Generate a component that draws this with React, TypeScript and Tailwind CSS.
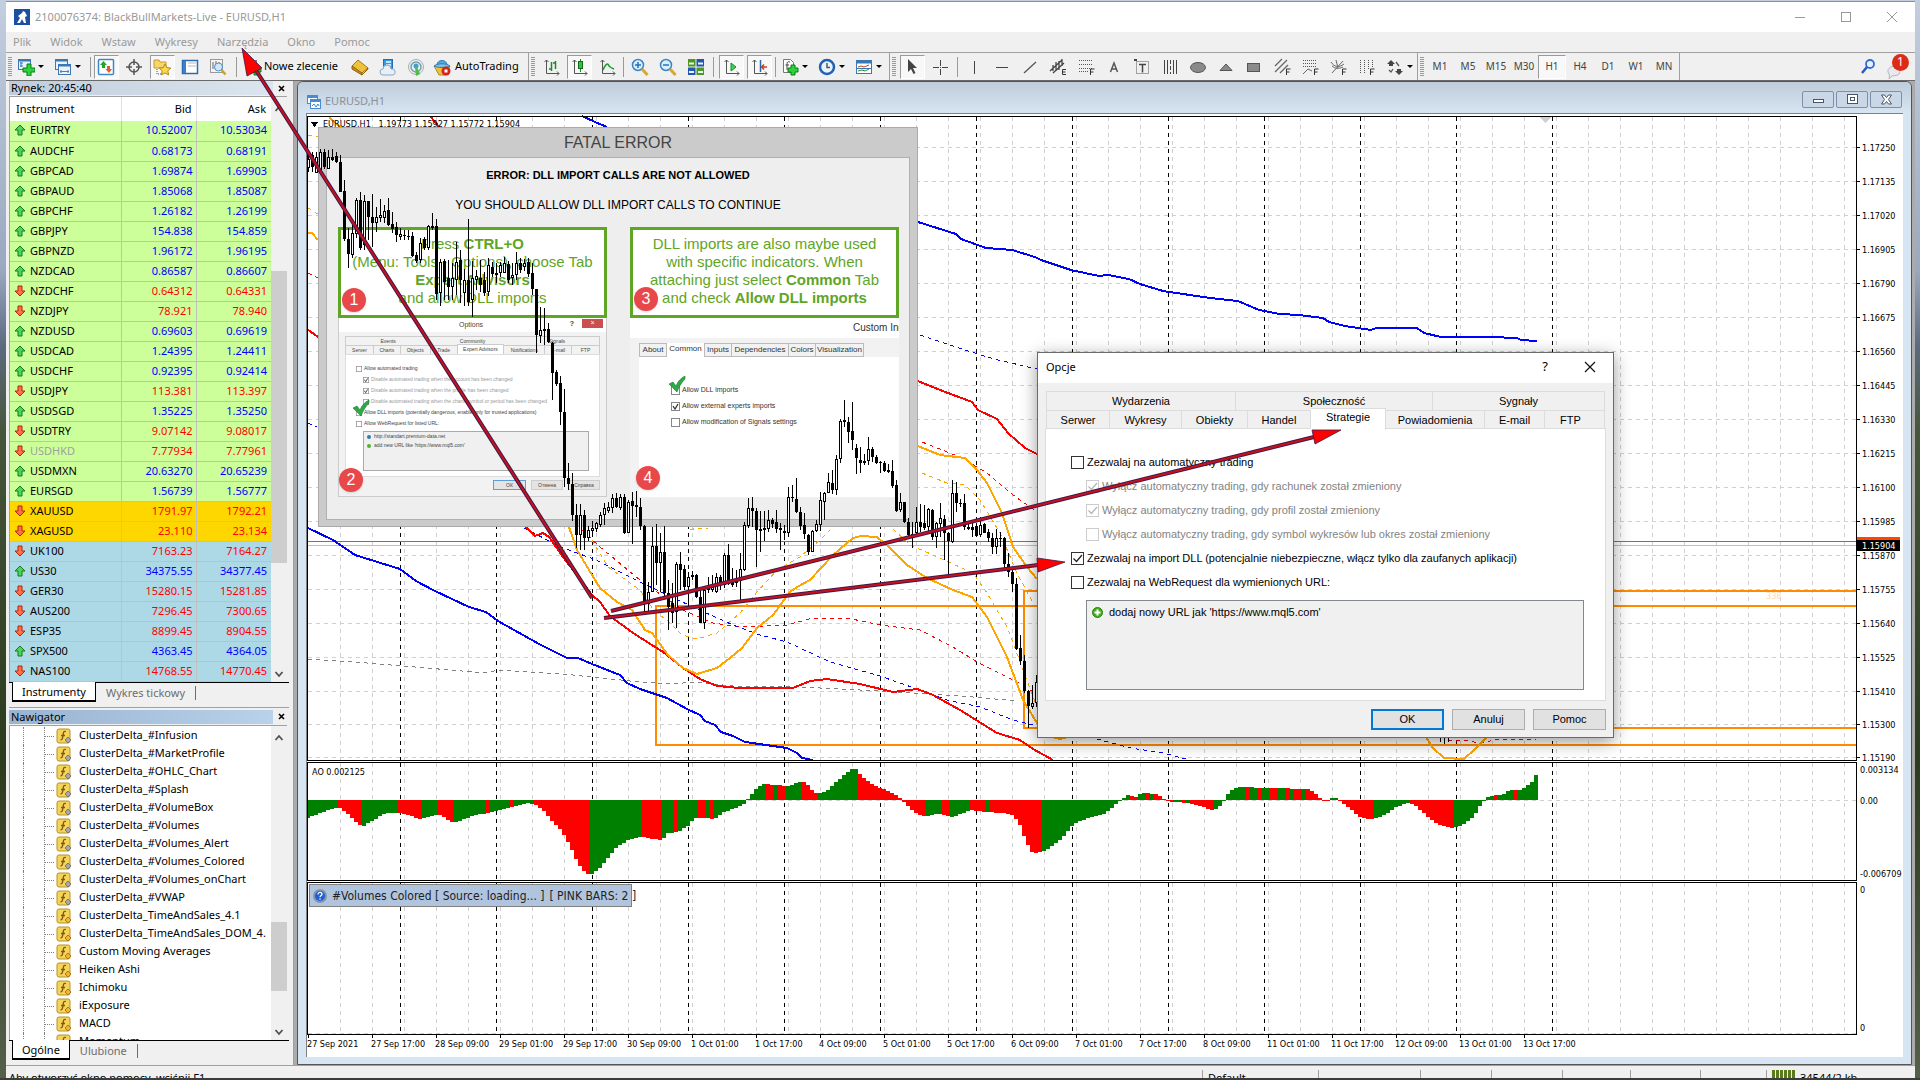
import React from "react";

/* ---------- market data ---------- */
type Quote = [string, string, string, "u" | "d", "g" | "y" | "b"];
const QUOTES: Quote[] = [
  ["EURTRY", "10.52007", "10.53034", "u", "g"], ["AUDCHF", "0.68173", "0.68191", "u", "g"],
  ["GBPCAD", "1.69874", "1.69903", "u", "g"], ["GBPAUD", "1.85068", "1.85087", "u", "g"],
  ["GBPCHF", "1.26182", "1.26199", "u", "g"], ["GBPJPY", "154.838", "154.859", "u", "g"],
  ["GBPNZD", "1.96172", "1.96195", "u", "g"], ["NZDCAD", "0.86587", "0.86607", "u", "g"],
  ["NZDCHF", "0.64312", "0.64331", "d", "g"], ["NZDJPY", "78.921", "78.940", "d", "g"],
  ["NZDUSD", "0.69603", "0.69619", "u", "g"], ["USDCAD", "1.24395", "1.24411", "u", "g"],
  ["USDCHF", "0.92395", "0.92414", "u", "g"], ["USDJPY", "113.381", "113.397", "d", "g"],
  ["USDSGD", "1.35225", "1.35250", "u", "g"], ["USDTRY", "9.07142", "9.08017", "d", "g"],
  ["USDHKD", "7.77934", "7.77961", "d", "g"], ["USDMXN", "20.63270", "20.65239", "u", "g"],
  ["EURSGD", "1.56739", "1.56777", "u", "g"], ["XAUUSD", "1791.97", "1792.21", "d", "y"],
  ["XAGUSD", "23.110", "23.134", "d", "y"], ["UK100", "7163.23", "7164.27", "d", "b"],
  ["US30", "34375.55", "34377.45", "u", "b"], ["GER30", "15280.15", "15281.85", "d", "b"],
  ["AUS200", "7296.45", "7300.65", "d", "b"], ["ESP35", "8899.45", "8904.55", "d", "b"],
  ["SPX500", "4363.45", "4364.05", "u", "b"], ["NAS100", "14768.55", "14770.45", "d", "b"],
];
const ROW_BG = { g: "bg-[#ccff99]", y: "bg-[#ffd700]", b: "bg-[#add8e6]" };

const INDICATORS = [
  "ClusterDelta_#Infusion", "ClusterDelta_#MarketProfile", "ClusterDelta_#OHLC_Chart", "ClusterDelta_#Splash",
  "ClusterDelta_#VolumeBox", "ClusterDelta_#Volumes", "ClusterDelta_#Volumes_Alert", "ClusterDelta_#Volumes_Colored",
  "ClusterDelta_#Volumes_onChart", "ClusterDelta_#VWAP", "ClusterDelta_TimeAndSales_4.1", "ClusterDelta_TimeAndSales_DOM_4.",
  "Custom Moving Averages", "Heiken Ashi", "Ichimoku", "iExposure", "MACD", "Momentum",
];

/* ---------- chart data ---------- */
/* high, body top, body bottom, low, in thirds of a pixel; u = rising bar */
const BARS_A = `160,178,203,217,u 155,165,200,215 155,170,218,220,u 148,155,218,218,u 148,157,200,207 150,172,207,207,u 148,172,180,182 155,168,186,190 166,185,275,275 240,273,418,422 384,418,463,505 375,400,465,475,u 293,300,402,415,u 275,300,443,450 285,303,435,450,u 303,303,352,420 282,350,370,440 320,350,370,397,u 298,345,355,365,u 315,332,355,370,u 295,330,375,378 335,372,388,398 367,380,405,425 385,402,412,420,u 390,404,409,420 390,407,410,420 397,408,467,472 455,465,482,490 415,430,480,490,u 412,418,445,450 375,378,445,450,u 340,378,384,390 358,378,582,600 478,485,580,617,u 478,483,545,600 480,535,562,600 490,535,560,600,u 425,485,540,585,u 450,480,540,610 508,540,580,617,u 358,540,605,617 483,535,600,650,u 510,528,540,570,u 480,535,555,575 515,540,578,588 475,495,575,588,u 485,500,522,530 490,520,524,550 485,495,520,530,u 470,490,520,520,u 482,492,540,550 490,525,535,555,u 455,490,525,540,u 473,490,510,520 478,490,500,512,u 475,487,523,530 490,520,568,585 568,568,705,759 620,690,708,729,u 625,687,693,735 670,688,727,730 727,730,819,900 810,816,852,858 828,849,936,975 867,936,1134,1161 1089,1134,1152,1170 1119,1152,1245,1263 1212,1245,1305,1344 1212,1245,1305,1350,u 1230,1245,1314,1350 1278,1290,1314,1323,u 1263,1284,1293,1305,u 1266,1269,1287,1296,u`;
const BARS_B = `515,525,555,560,u 488,503,525,555,u 485,500,512,520,u 462,475,505,520,u 460,475,502,505 462,470,505,510,u 463,470,580,583 480,485,580,580,u 455,484,497,612 452,495,500,530 475,500,557,570 555,557,793,815 725,755,793,820,u 560,618,755,757,u 552,618,668,735 580,635,668,755,u 558,635,760,768 720,760,800,870 730,790,818,850 667,672,815,865,u 635,672,690,750 675,687,742,750 695,710,742,800,u 693,705,712,720,u 703,706,770,775 745,770,850,850 745,750,850,868,u 710,738,750,760,u 705,737,750,755,u 700,712,755,760,u 705,712,735,750 638,645,735,745,u 612,645,733,735 685,725,735,740 690,722,728,740 640,687,722,780,u 545,555,690,692,u 475,505,558,565,u 472,505,512,560 505,512,570,680 512,566,572,635 512,565,570,602,u 510,540,568,575,u 535,540,552,565 510,545,568,580 550,565,570,630 555,572,580,600 440,470,580,590,u 435,470,475,485 415,478,515,520 500,515,557,570 520,555,582,598 582,584,635,645 570,573,635,635,u 540,553,573,575,u 455,480,555,572,u 455,460,485,540,u 400,427,460,460,u 390,428,450,462 345,358,450,465,u 238,242,358,370,u 180,240,246,260 230,245,275,308 185,273,300,330 312,325,355,402 320,360,370,400 342,362,368,375,u 290,328,362,375,u 320,328,350,365 345,350,368,372 362,365,368,398 362,368,392,397 372,390,396,400 360,393,437,445 420,435,512,515 458,487,510,515,u 485,487,545,548 535,545,585,587 545,583,588,625,u 500,547,580,590,u 492,547,560,575 495,548,563,570 505,508,562,575,u 508,510,590,600 545,550,590,625,u 490,535,553,590,u 525,537,580,660 575,580,603,705 420,460,605,608,u 425,460,490,515 478,488,492,500 463,490,560,570 545,560,568,570 540,562,570,590 548,557,587,590 530,555,585,590,u 548,553,578,580 568,575,595,605 580,593,620,643 568,595,620,643,u 575,593,597,620 592,595,673,685 640,673,695,710 680,695,733,755 715,733,928,930 885,925,962,975 945,962,1052,1060 1050,1053,1097,1165 1035,1088,1100,1108,u 1005,1025,1090,1100,u`;

type Bar = { x: number; h: number; t: number; b: number; l: number; up: boolean };
const parseBars = (src: string, x0: number, y0: number): Bar[] =>
  src.split(" ").map((s, i) => {
    const [h, t, b, l, u] = s.split(",");
    const y = (v: string) => Math.round(y0 + Number(v) / 3);
    return { x: x0 + i * 4, h: y(h), t: y(t), b: Math.max(y(b), y(t) + 1), l: y(l), up: u === "u" };
  });
const BARS = [...parseBars(BARS_A, 308, 100), ...parseBars(BARS_B, 600, 340)];

/* oscillator: envelope points and colour runs */
const AO_ENV = [308,818,320,813,338,807,346,812,354,820,362,827,370,822,386,813,402,813,414,817,422,819,438,814,454,823,462,820,474,815,490,813,510,807,530,803,538,806,546,813,554,823,562,831,570,845,576,859,582,869,590,875,598,870,606,860,616,848,628,840,642,836,654,839,662,840,668,833,678,832,688,826,694,818,706,818,714,819,722,813,736,808,745,803,748,799,756,789,762,784,790,786,798,782,806,782,814,793,826,792,834,784,842,777,852,769,856,769,862,777,874,785,886,790,894,794,900,798,906,804,914,812,926,817,934,814,942,814,950,817,958,815,970,810,986,812,1006,813,1014,816,1020,825,1026,841,1032,852,1038,853,1046,850,1054,845,1064,836,1074,824,1090,817,1106,813,1114,806,1122,799,1128,795,1136,797,1142,793,1158,794,1166,801,1190,803,1202,806,1214,811,1222,804,1230,791,1238,787,1310,789,1318,796,1326,802,1334,797,1338,798,1343,803,1354,812,1362,818,1374,819,1386,814,1396,807,1408,803,1414,804,1426,815,1438,824,1450,828,1462,825,1474,816,1480,806,1486,797,1494,795,1502,795,1510,790,1520,790,1528,785,1532,782,1536,775];
const AO_RUNS = [338,362,398,422,438,454,486,490,510,514,534,590,642,662,674,678,698,706,710,714,766,774,778,786,802,818,858,926,942,950,970,986,990,1042,1130,1138,1146,1150,1154,1174,1182,1186,1190,1214,1246,1250,1258,1262,1270,1278,1286,1290,1294,1302,1306,1330,1338,1374,1410,1454,1494,1498,1514,1518,1538];
const aoAt = (x: number) => {
  for (let i = 0; i + 3 < AO_ENV.length; i += 2) {
    const [xa, ya, xb, yb] = AO_ENV.slice(i, i + 4);
    if (x >= xa && x <= xb) return Math.round(ya + ((yb - ya) * (x - xa)) / (xb - xa));
  }
  return AO_ENV[AO_ENV.length - 1];
};
const AO = Array.from({ length: 308 }, (_, i) => {
  const x = 306 + i * 4;
  const run = AO_RUNS.findIndex((e) => x + 2 < e);
  return { x, y: aoAt(Math.max(x + 2, 308)), red: run % 2 === 1 };
});

const SOLID: [string, string][] = [
  ["#0000ff", "582,116 595,122 607,127"],
  ["#0000ff", "918,222 956,234 961,239 986,248 1012,250 1035,257 1041,260 1071,270 1099,276 1108,275 1129,279 1140,284 1163,291 1210,298 1238,301 1259,310 1280,314 1299,315 1323,318 1329,322 1345,326 1371,330 1376,328 1417,328 1424,333 1441,337 1490,337 1517,338 1521,340 1537,341"],
  ["#0000ff", "308,528 333,540 355,555 400,569 416,581 435,591 469,607 486,612 498,621 539,644 567,658 578,658 592,664 620,675 627,683 640,689 667,698 687,709 700,715 705,721 715,725 721,732 733,736 745,742 773,746 787,748 797,753 802,758 813,760"],
  ["#ff0000", "430,116 440,128"], ["#ff0000", "307,329 318,337"],
  ["#ff0000", "918,381 940,390 972,402 978,410 997,419 1008,433 1025,448 1037,454"],
  ["#ff0000", "526,527 535,536 543,533 549,537 563,557 592,595 600,602 610,616 633,633 663,652 683,668 700,679 717,686 740,688 793,688 810,681 827,679 860,684 893,692 917,689 933,695 960,710 997,733 1020,740 1033,749 1053,760"],
  ["#ffa500", "308,233 312,233 318,240"], ["#ffa500", "329,117 341,128"],
  ["#ffa500", "918,446 940,455 965,458 977,470 987,483 1002,513 1013,547 1027,567 1037,579"],
  ["#ffa500", "569,527 577,550 589,570 600,588 617,602 632,610 645,630 652,633 668,655 683,668 697,674 717,668 730,658 742,648 757,628 773,615 790,592 797,587 810,580 833,555 853,538 861,536 877,537 890,548 907,565 927,578 953,590 972,597 987,617 1007,657 1023,700 1037,723 1048,736 1060,739 1072,736"],
  ["#ffa500", "1426,737 1433,748 1444,758 1464,759 1475,749 1487,737"],
];
const DASHED: [string, string][] = [
  ["#ffa500", "592,540 608,567 640,590 655,612 667,620 682,635 697,639 717,633 740,613 757,592 777,570 800,557 820,540 832,528"],
  ["#ffa500", "690,530 697,528 708,528"],
  ["#ffa500", "893,529 910,545 933,555 973,573 987,593 1007,627 1037,707"],
  ["#ffa500", "922,473 947,483 965,485 980,500 1000,533 1017,573 1033,603"],
  ["#ffa500", "308,135 318,137"], ["#ffa500", "308,208 318,214"],
  ["#ff0000", "582,530 600,547 640,580 683,610 713,623 740,627 787,625 813,618 847,618 880,625 920,630 953,647 977,662 1017,682 1037,694"],
  ["#ff0000", "922,442 960,457 987,473 1013,495 1037,512"], ["#ff0000", "308,273 318,278"],
  ["#ff0000", "1448,740 1463,740 1480,743 1500,739 1520,740 1536,739"],
  ["#0000ff", "524,528 561,547 596,560 640,582 693,607 733,625 760,635 787,642 830,662 880,676 917,689 947,700 980,707 1013,720 1037,726"],
  ["#0000ff", "1089,737 1131,748 1163,753 1186,759"],
  ["#0000ff", "920,335 965,350 994,359 1037,369"], ["#0000ff", "308,423 317,427"],
  ["#808080", "308,659 367,663 486,673 498,670 563,674 640,682 673,684 693,682 733,686 800,687 880,691 973,697 1017,701"],
];

const PRICES = ["1.17250","1.17135","1.17020","1.16905","1.16790","1.16675","1.16560","1.16445","1.16330","1.16215","1.16100","1.15985","1.15870","1.15755","1.15640","1.15525","1.15410","1.15300","1.15190"];
const priceY = (i: number) => (i < 17 ? 147 + i * 34 : i === 17 ? 724 : 757);
const TIMES = ["27 Sep 2021","27 Sep 17:00","28 Sep 09:00","29 Sep 01:00","29 Sep 17:00","30 Sep 09:00","1 Oct 01:00","1 Oct 17:00","4 Oct 09:00","5 Oct 01:00","5 Oct 17:00","6 Oct 09:00","7 Oct 01:00","7 Oct 17:00","8 Oct 09:00","11 Oct 01:00","11 Oct 17:00","12 Oct 09:00","13 Oct 01:00","13 Oct 17:00"];
const PANES = [[117, 760], [763, 880], [883, 1034]];

function ChartBack() {
  return (
    <svg className="absolute inset-0 size-full" aria-hidden="true">
      <g transform="translate(-306 -113)" shapeRendering="crispEdges" fill="none">
        {PANES.map(([a, b]) => (
          <g key={a}>
            {Array.from({ length: 48 }, (_, i) => (
              <path key={i} d={`M${340.5 + i * 32} ${a}V${b}`} stroke="#d0d0d0" strokeDasharray="4 4" />
            ))}
            {Array.from({ length: 13 }, (_, i) => (
              <path key={i} d={`M${400.5 + i * 96} ${a}V${b}`} stroke="#000" strokeDasharray="4 4" />
            ))}
          </g>
        ))}
        {PRICES.map((p, i) => (
          <path key={p} d={`M308 ${priceY(i) + 0.5}H1856`} stroke="#d0d0d0" strokeDasharray="4 4" />
        ))}
        <path d="M308 800.5H1856" stroke="#d0d0d0" strokeDasharray="4 4" />
        <path d="M308 1033.5H1856" stroke="#d0d0d0" strokeDasharray="4 4" />
        {AO.map((a) => (
          <rect key={a.x} x={Math.max(a.x, 308)} y={Math.min(a.y, 800)} width={a.x < 308 ? 2 : 4} height={Math.max(Math.abs(a.y - 800), 1)} fill={a.red ? "#ff0000" : "#008000"} />
        ))}
        <path d="M308 545.5H1856" stroke="#c0c0c0" />
        <path d="M308 541.5H1856" stroke="#ff4500" />
        <g stroke="#ff8c00" strokeWidth="2">
          <path d="M1856 606H656V745H1856" />
          <path d="M1856 591H1024V728H1856" />
        </g>
        {DASHED.map(([c, p]) => <polyline key={p} points={p} stroke={c} strokeDasharray="4 4" />)}
        {SOLID.map(([c, p]) => <polyline key={p} points={p} stroke={c} strokeWidth="2" />)}
        <path d="M1540 117h11l-5.500 6z" fill="#d0d0d0" />
        <path d="M311 122h7l-3.500 5z" fill="#000" />
        <g stroke="#000">
          <path d="M1856.500 116.500H307.500V760.500H1856.500z" />
          <path d="M1856.500 762.500H307.500V880.500H1856.500z" />
          <path d="M1856.500 882.500H307.500V1034.500H1856.500z" />
          {PRICES.map((p, i) => <path key={p} d={`M1856 ${priceY(i) + 0.5}h4`} />)}
          {TIMES.map((t, i) => <path key={t} d={`M${308.5 + i * 64} 1034v4`} />)}
        </g>
        <rect x="1857" y="537" width="43" height="10" fill="#ff4500" />
        <rect x="1857" y="540" width="43" height="11" fill="#000" />
        <g fill="#000" fontFamily="'DejaVu Sans Condensed', 'DejaVu Sans', sans-serif" fontSize="9">
          {PRICES.map((p, i) => <text key={p} x="1862" y={priceY(i) + 4}>{p}</text>)}
          <text x="1862" y="549" fill="#fff">1.15904</text>
          <text x="1860" y="773">0.003134</text>
          <text x="1860" y="804">0.00</text>
          <text x="1860" y="877">-0.006709</text>
          <text x="1860" y="893">0</text>
          <text x="1860" y="1031">0</text>
          {TIMES.map((t, i) => <text key={t} x={307 + i * 64} y="1047">{t}</text>)}
          <text x="312" y="775">AO 0.002125</text>
          <text x="323" y="127">EURUSD,H1&nbsp;&nbsp; 1.19773 1.15927 1.15772 1.15904</text>
          <text x="1766" y="599" fill="#ffd9a8">338</text>
        </g>
      </g>
    </svg>
  );
}

function Candles() {
  return (
    <svg className="pointer-events-none absolute inset-0 size-full" aria-hidden="true">
      <g transform="translate(-306 -113)" shapeRendering="crispEdges">
        {BARS.map((b) => (
          <g key={b.x}>
            <rect x={b.x} y={b.h} width="1" height={Math.max(b.l - b.h, 1)} />
            <rect x={b.x - 1} y={b.t} width="3" height={b.b - b.t} />
            {b.up && b.b - b.t > 2 && <rect x={b.x} y={b.t + 1} width="1" height={b.b - b.t - 2} fill="#fff" />}
          </g>
        ))}
        <path d="M1440 738v4h1v-4zM1444 738v6h1v-6zM1448 737v5h1v-5z" />
      </g>
    </svg>
  );
}

/* ---------- icons ---------- */
const S = ({ children, w = 18, className = "" }: { children: React.ReactNode; w?: number; className?: string }) => (
  <svg width={w} height="18" viewBox={`0 0 ${w} 18`} fill="none" className={`shrink-0 ${className}`} aria-hidden="true">{children}</svg>
);
const axes = <path d="M4.500 2v13.500H17M2.500 4l2-2 2 2M15 13.500l2 2-2 2" stroke="#555" />;
const fLetter = <path d="M13.500 17v-6h4M13.500 14h3" stroke="#333" />;
const I: Record<string, React.ReactNode> = {
  newChart: <S><rect x="1.500" y="1.500" width="12" height="10" fill="#eaf3fb" stroke="#3a78b5" /><path d="M1 2.500h13" stroke="#3a78b5" strokeWidth="2" /><path d="M4 4v5M3 5h3M3 8h3" stroke="#3a78b5" /><path d="M10 6h4v4h4v4h-4v4h-4v-4H6v-4h4z" fill="#2bd23b" stroke="#0b7d16" /></S>,
  profiles: <S><rect x="1.500" y="1.500" width="12" height="10" fill="#eaf3fb" stroke="#3a78b5" /><rect x="4.500" y="6.500" width="12" height="10" fill="#eaf3fb" stroke="#3a78b5" /><path d="M1 2.500h12M4 7.500h13" stroke="#3a78b5" strokeWidth="2" /><path d="M6 13.500h9M7 12v3M14 12v3" stroke="#777" /></S>,
  market: <S><rect x="1.500" y="1.500" width="15" height="15" rx="1" fill="#fff" stroke="#3a88c8" strokeWidth="1.500" /><path d="M6.500 3l3.500 4H8v3H5V7H3z" fill="#22a52a" /><path d="M12 15l-3.500-4H10V8h3v3h2z" fill="#e8582a" /></S>,
  cross: <S><circle cx="9" cy="9" r="5" stroke="#555" strokeWidth="1.500" /><path d="M9 1v6M9 11v6M1 9h6M11 9h6" stroke="#555" strokeWidth="1.500" /></S>,
  folder: <S><path d="M1 2h5l1 2h6v6H1z" fill="#f6d56b" stroke="#c99a2a" /><path d="M4 11v5h4" stroke="#555" strokeDasharray="1 1" /><path d="M12 6l1.800 3.600 4 .5-3 2.700.8 4.100-3.600-2-3.600 2 .8-4.100-3-2.700 4-.5z" fill="#ffd84d" stroke="#b5851a" /></S>,
  terminal: <S><rect x="1.500" y="2.500" width="15" height="13" fill="#fff" stroke="#2b6db3" strokeWidth="1.500" /><rect x="2" y="3" width="3" height="12" fill="#3f7fd0" /><path d="M7 5h8M7 8h8" stroke="#b8b8b8" /></S>,
  tester: <S><rect x="1.500" y="1.500" width="12" height="13" fill="#f4f4f4" stroke="#999" /><path d="M4 4v7M7 3v6M10 4v5" stroke="#666" /><circle cx="9.500" cy="9" r="4" fill="#cfe8fb" stroke="#4a90c8" /><path d="M12.500 12l4 4.500" stroke="#caa02c" strokeWidth="2.500" /></S>,
  order: <S><rect x="2.500" y="2.500" width="10" height="12" fill="#fff" stroke="#777" /><path d="M10 8h4v3h3v3h-3v3h-4v-3H7v-3h3z" fill="#21c431" stroke="#0b7d16" /></S>,
  book: <S><path d="M1 8l6-6 10 8-6 6z" fill="#f0c23a" stroke="#a8761a" /><path d="M1 8v3l10 6v-2z" fill="#c98f22" stroke="#8f6214" /><path d="M11 17l6-6v-1l-6 5z" fill="#fff3c8" stroke="#8f6214" /></S>,
  cloud: <S><rect x="4.500" y="1.500" width="9" height="10" fill="#2f9be8" stroke="#1e6fb8" /><path d="M7 4h5M7 7h5" stroke="#fff" strokeWidth="1.500" /><path d="M4 17a3 3 0 010-6 4 4 0 018 0 3 3 0 012 6z" fill="#e6eef7" stroke="#8aa4c2" /></S>,
  signal: <S><circle cx="9" cy="9" r="7.500" stroke="#9fb5ab" /><circle cx="9" cy="9" r="5" stroke="#6f9fb0" strokeWidth="1.500" /><circle cx="9" cy="8" r="2.500" fill="#3aa1c8" /><path d="M8 9h2l3 7-4 2z" fill="#55b848" /></S>,
  auto: <S><path d="M1 8h16l-4 9H6z" fill="#f0c23a" stroke="#b18a22" /><path d="M4 7c0-6 10-6 10 0z" fill="#56a8dc" stroke="#2f7db0" /><path d="M1 8c4-3 12-3 16 0-4 2-12 2-16 0z" fill="#7fc0e6" stroke="#2f7db0" /><circle cx="13" cy="13" r="4.500" fill="#d3261a" /><rect x="11.500" y="11.500" width="3" height="3" fill="#fff" /></S>,
  bars: <S>{axes}<path d="M9.500 4v9M7 11h2.500M13.500 3v8M11 5h2.500" stroke="#1c8a28" strokeWidth="1.500" /></S>,
  candle: <S>{axes}<path d="M10.500 1v13" stroke="#1c8a28" /><rect x="8.500" y="3.500" width="4" height="7" fill="#2fc440" stroke="#116b1b" /></S>,
  lineC: <S>{axes}<path d="M5 12c3-7 5-7 6-4 1 1 2 2 5 3" stroke="#1c9a28" strokeWidth="1.500" /></S>,
  zin: <S><circle cx="7" cy="7" r="5.500" fill="#d9efff" stroke="#3a83c4" strokeWidth="1.500" /><path d="M4 7h6M7 4v6" stroke="#2472b8" strokeWidth="1.500" /><path d="M11 11l5.500 6" stroke="#d9a82c" strokeWidth="3" /></S>,
  zout: <S><circle cx="7" cy="7" r="5.500" fill="#d9efff" stroke="#3a83c4" strokeWidth="1.500" /><path d="M4 7h6" stroke="#2472b8" strokeWidth="1.500" /><path d="M11 11l5.500 6" stroke="#d9a82c" strokeWidth="3" /></S>,
  tile: <S><rect x="1" y="1" width="7.500" height="7.500" fill="#4a9a1e" /><rect x="9.500" y="1" width="7.500" height="7.500" fill="#2456b0" /><rect x="1" y="9.500" width="7.500" height="7.500" fill="#2456b0" /><rect x="9.500" y="9.500" width="7.500" height="7.500" fill="#4a9a1e" /><path d="M2 5.500h5M11 5.500h5M2 14h5M11 14h5" stroke="#e9f4ff" strokeWidth="2" /></S>,
  shift: <S>{axes}<path d="M9 5v8l5-4z" fill="#45d055" stroke="#168a22" /></S>,
  autoS: <S>{axes}<path d="M10.500 2v12" stroke="#2a66b0" strokeWidth="1.500" /><path d="M17 9h-5M14 6.500L11.500 9l2.500 2.500" stroke="#c3401c" strokeWidth="1.500" /></S>,
  indic: <S><path d="M2.500 1.500h7l3 3v10h-10z" fill="#fff" stroke="#777" /><path d="M9 4c-3-1-3 1-3 3v5M4.500 7H8" stroke="#444" /><path d="M10 7h4v3h3v4h-3v3h-4v-3H7v-4h3z" fill="#2bd23b" stroke="#0b7d16" /></S>,
  clock: <S><circle cx="9" cy="9" r="7" fill="#e8f4ff" stroke="#1f62b3" strokeWidth="2.500" /><path d="M9 5v4.500h3" stroke="#555" strokeWidth="1.500" /></S>,
  templ: <S><rect x="1.500" y="2.500" width="15" height="13" fill="#fff" stroke="#3a78b5" /><path d="M1 4h16" stroke="#3a78b5" strokeWidth="3" /><path d="M3 9l3-1 3 1 5-2" stroke="#b04a2a" /><path d="M3 13l4-1 3 1 4-2" stroke="#2a8a3a" /><path d="M2 10.500h14" stroke="#3a78b5" /></S>,
  cursor: <S><path d="M5 1v13l3-3 2.500 5 2-1L10 10h4z" fill="#444" /></S>,
  plus: <S><path d="M9.500 2v6M9.500 11v6M2 9.500h6M11 9.500h6M9 9.500h1" stroke="#444" /></S>,
  vline: <S><path d="M9.500 3v13" stroke="#444" /></S>,
  hline: <S><path d="M3 9.500h12" stroke="#444" /></S>,
  diag: <S><path d="M3 15L15 4" stroke="#555" strokeWidth="1.300" /></S>,
  chanE: <S><path d="M1 13L13 2M4 15L15 5M4 7v6M7 4v9M10 3v9M13 1v7" stroke="#444" strokeWidth="1.300" /><path d="M17 11.500h-3.500v5H17M13.500 14h3" stroke="#333" /></S>,
  fibo: <S><path d="M2 2.500h14M2 6.500h14M2 10.500h14M2 13.500h9" stroke="#555" strokeDasharray="1 1" />{fLetter}</S>,
  textA: <S><path d="M5.500 14L9 5l3.500 9M7 11h4" stroke="#555" strokeWidth="1.500" /></S>,
  label: <S><rect x="3.500" y="3.500" width="12" height="12" stroke="#555" strokeDasharray="1 1" /><path d="M6 6.500h7M9.500 6.500v8" stroke="#444" strokeWidth="1.500" /><path d="M1 1h3v2H1z" fill="#444" /></S>,
  cycles: <S><path d="M3.500 2v14M6.500 2v14M12.500 2v14M15.500 2v14" stroke="#444" /><path d="M9.500 2v14" stroke="#444" strokeDasharray="4 2" /></S>,
  ell: <S><ellipse cx="9" cy="9.500" rx="7.500" ry="5" fill="#8a8a8a" stroke="#555" /></S>,
  tri: <S><path d="M3 12.500L9 6l6 6.500z" fill="#8a8a8a" stroke="#555" /></S>,
  rect: <S><rect x="2.500" y="5.500" width="12" height="8" fill="#8a8a8a" stroke="#555" /></S>,
  fchan: <S><path d="M2 8L9 1M2 14L14 2M7 15l8-8" stroke="#666" strokeWidth="1.300" />{fLetter}</S>,
  fexp: <S><path d="M2 2.500h14M2 5.500h14M2 8.500h14" stroke="#555" strokeDasharray="1 1" /><path d="M2 16l5-5 4 2" stroke="#666" />{fLetter}</S>,
  ffan: <S><path d="M3 15L14 3M2 4c3 5 8 6 13 2M3 8c4 3 6 3 11 1M7 2l2 8" stroke="#666" />{fLetter}</S>,
  ftime: <S><path d="M3.500 2v13M7.500 2v13M11.500 2v9M15.500 2v8" stroke="#555" strokeDasharray="1 1" />{fLetter}</S>,
  arrows: <S><path d="M5 2l4 4H7v2H3V6H1z M13 17l-4-4h2v-2h4v2h2z" fill="#444" /><path d="M3 12l2 2 2-3M10 4l3 4" stroke="#555" strokeWidth="1.300" /></S>,
};

function Quo({ up }: { up: boolean }) {
  return (
    <svg width="12" height="12" viewBox="0 0 12 12" className="shrink-0" aria-hidden="true">
      {up ? <path d="M6 1l5 5H8v5H4V6H1z" fill="#4fd35a" stroke="#137a1d" /> : <path d="M6 11L1 6h3V1h4v5h3z" fill="#ff7048" stroke="#b3240c" />}
    </svg>
  );
}

/* ---------- toolbar parts ---------- */
const Grip = () => <span className="mx-[2px] h-5 w-1 shrink-0 bg-[repeating-linear-gradient(#9a9a9a_0_1px,transparent_1px_2px)]" />;
const Sep = ({ w }: { w: string }) => <span className={`flex h-5 shrink-0 justify-center ${w}`}><span className="h-full w-px bg-[#9a9a9a]" /></span>;
const Caret = () => <span className="border-x-[3px] border-t-[3px] border-x-transparent border-t-black" />;
function Tool({ icon, on = false, label }: { icon: string; on?: boolean; label: string }) {
  return (
    <button type="button" aria-label={label} className="flex h-6 w-7 shrink-0 items-center justify-center">
      <span className={on ? "flex h-6 w-[25px] items-center justify-center border border-b-white border-l-[#9a9a9a] border-r-white border-t-[#9a9a9a] bg-[#f8f8f8]" : ""}>{I[icon]}</span>
    </button>
  );
}
function DropTool({ icon, label }: { icon: string; label: string }) {
  return <button type="button" aria-label={label} className="flex h-6 w-[37px] shrink-0 items-center gap-[3px] pl-[3px]">{I[icon]}<Caret /></button>;
}
const DRAW = ["vline", "hline", "diag", "chanE", "fibo", "textA", "label", "cycles", "ell", "tri", "rect", "fchan", "fexp", "ffan", "ftime"];

function Toolbar() {
  return (
    <div className="flex h-[28px] shrink-0 items-center border-t border-[#a0a0a0] bg-[#f0f0f0] text-[11px]">
      <div className="flex h-full w-[523px] shrink-0 items-center border-r border-[#a0a0a0]">
        <Grip />
        <DropTool icon="newChart" label="Nowy wykres" /><DropTool icon="profiles" label="Profile" />
        <Sep w="w-[4px]" />
        <Tool icon="market" on label="Rynek" /><Tool icon="cross" label="Okno danych" /><Tool icon="folder" on label="Nawigator" />
        <Tool icon="terminal" label="Terminal" /><Tool icon="tester" label="Tester" />
        <Sep w="w-[8px]" />
        <button type="button" className="flex w-[106px] shrink-0 items-center gap-[2px] whitespace-nowrap pl-1">{I.order}Nowe zlecenie</button>
        <Tool icon="book" label="MetaEditor" /><Tool icon="cloud" label="VPS" /><Tool icon="signal" label="Sygnały" />
        <button type="button" className="flex shrink-0 items-center gap-1 whitespace-nowrap pl-[3px]">{I.auto}AutoTrading</button>
      </div>
      <div className="flex h-full w-[361px] shrink-0 items-center border-r border-[#a0a0a0]">
        <Grip />
        <Tool icon="bars" label="Słupki" /><Tool icon="candle" on label="Świece" /><Tool icon="lineC" label="Linia" />
        <Sep w="w-[5px]" />
        <Tool icon="zin" label="Powiększ" /><Tool icon="zout" label="Pomniejsz" /><Tool icon="tile" label="Okna" />
        <Sep w="w-[7px]" />
        <Tool icon="shift" on label="Przewijanie" /><Tool icon="autoS" on label="Przesunięcie" />
        <Sep w="w-[5px]" />
        <DropTool icon="indic" label="Wskaźniki" /><DropTool icon="clock" label="Okresy" /><DropTool icon="templ" label="Szablony" />
      </div>
      <div className="flex h-full w-[528px] shrink-0 items-center border-r border-[#a0a0a0]">
        <Grip />
        <Tool icon="cursor" on label="Kursor" /><Tool icon="plus" label="Celownik" />
        <Sep w="w-[6px]" />
        {DRAW.map((d) => <Tool key={d} icon={d} label={d} />)}
        <button type="button" aria-label="Strzałki" className="flex w-9 items-center gap-[3px] pl-[6px]">{I.arrows}<Caret /></button>
      </div>
      <div className="flex h-full shrink-0 items-center border-r border-[#a0a0a0] pr-px text-[10px] text-[#444]">
        <Grip />
        {["M1", "M5", "M15", "M30", "H1", "H4", "D1", "W1", "MN"].map((p) => (
          <button type="button" key={p} className={p === "H1" ? "h-6 w-7 border border-b-white border-l-[#9a9a9a] border-r-white border-t-[#9a9a9a] bg-[#f8f8f8]" : "h-6 w-7"}>{p}</button>
        ))}
      </div>
      <div className="ml-auto flex shrink-0 items-center gap-[10px] pr-[6px]">
        <button type="button" aria-label="Szukaj"><S><circle cx="11" cy="6" r="4" fill="#e4f0ff" stroke="#2f6fd0" strokeWidth="1.800" /><path d="M8 9l-5 6" stroke="#2f55c0" strokeWidth="2.500" /></S></button>
        <button type="button" aria-label="Wiadomości" className="relative h-[26px] w-[22px]">
          <S className="absolute bottom-0 left-0"><path d="M1 10a6 5 0 1110 3l-6 1-3 3 .5-4z" fill="#e8e8ee" stroke="#b5b5bd" /></S>
          <span className="absolute right-0 top-0 flex size-[17px] items-center justify-center rounded-full bg-[#dd2c16] text-[12px] text-white">1</span>
        </button>
      </div>
    </div>
  );
}

/* ---------- side panels ---------- */
function PanelTitle({ text, cls }: { text: string; cls: string }) {
  return (
    <div className="flex h-[14px] shrink-0 items-center text-[11px] leading-[14px]">
      <h2 className={`h-full flex-1 pl-[2px] ${cls}`}>{text}</h2>
      <button type="button" aria-label="Zamknij" className="flex w-4 justify-center">
        <svg width="7" height="7" viewBox="0 0 7 7"><path d="M1 1l5 5M6 1L1 6" stroke="#000" strokeWidth="1.600" /></svg>
      </button>
    </div>
  );
}
const Chev = ({ down = false }: { down?: boolean }) => (
  <svg width="10" height="8" viewBox="0 0 10 8" fill="none" aria-hidden="true"><path d={down ? "M1.500 2L5 6l3.500-4" : "M1.500 6L5 2l3.500 4"} stroke="#505050" strokeWidth="1.800" /></svg>
);
function ScrollBar({ thumb }: { thumb: string }) {
  return (
    <div className="relative flex w-4 shrink-0 flex-col items-center justify-between bg-[#f0f0f0] pb-1 pt-2">
      <Chev /><Chev down /><span className={`absolute inset-x-0 bg-[#cdcdcd] ${thumb}`} />
    </div>
  );
}
function PanelTabs({ on, off }: { on: string; off: string }) {
  return (
    <div className="flex h-5 shrink-0 items-start border-t border-black text-[11px] leading-[19px]">
      <button type="button" className="-mt-px ml-[3px] h-5 border-x border-b-2 border-black bg-white px-[9px]">{on}</button>
      <button type="button" className="px-[10px] text-[#6d6d6d]">{off}</button>
      <span className="mt-[3px] h-[14px] w-px bg-[#6d6d6d]" />
    </div>
  );
}

function MarketWatch() {
  return (
    <section className="flex flex-col border-b border-[#a0a0a0] pb-[5px]">
      <PanelTitle text="Rynek: 20:45:40" cls="bg-gradient-to-r from-[#bfcddb] to-[#dce5ef]" />
      <div className="mr-[2px] mt-px flex border-l border-t border-[#a0a0a0]">
        <table className="min-w-0 flex-1 table-fixed border-collapse bg-white text-[11px] leading-[18px]">
          <thead>
            <tr className="h-6">
              <th className="border-r border-[#e0e0e0] pl-[6px] text-left font-normal">Instrument</th>
              <th className="w-[75px] border-r border-[#e0e0e0] pr-1 text-right font-normal">Bid</th>
              <th className="w-[75px] pr-[5px] text-right font-normal">Ask</th>
            </tr>
          </thead>
          <tbody className="align-top">
            {QUOTES.map(([n, bid, ask, dir, bg]) => (
              <tr key={n} className={`h-5 border-b border-[#c0c0c0] ${ROW_BG[bg]} ${dir === "u" ? "text-[#0000ff]" : "text-[#ff0000]"}`}>
                <td className="border-r border-[#c0c0c0] pl-1">
                  <span className={`flex items-center gap-1 ${n === "USDHKD" ? "text-[#a0a0a0]" : "text-black"}`}><Quo up={dir === "u"} />{n}</span>
                </td>
                <td className="border-r border-[#c0c0c0] pr-[3px] text-right">{bid}</td>
                <td className="pr-1 text-right">{ask}</td>
              </tr>
            ))}
          </tbody>
        </table>
        <ScrollBar thumb="top-[174px] h-[292px]" />
      </div>
      <PanelTabs on="Instrumenty" off="Wykres tickowy" />
    </section>
  );
}

function Navigator() {
  return (
    <section className="flex min-h-0 flex-1 flex-col pt-[2px]">
      <PanelTitle text="Nawigator" cls="bg-gradient-to-r from-[#99b4d1] to-[#b9d1ea]" />
      <div className="mr-[2px] mt-px flex min-h-0 flex-1 border-l border-t border-[#a0a0a0] bg-white">
        <ul className="min-w-0 flex-1 overflow-hidden pt-px text-[11px]">
          {INDICATORS.map((n, i) => (
            <li key={n} className="flex h-[18px] items-center whitespace-nowrap pl-[13px]">
              <span className="h-full w-[21px] border-l border-dotted border-[#808080]" />
              <span className="h-full w-[10px] border-l border-dotted border-[#808080] pt-[9px]"><span className="block border-t border-dotted border-[#808080]" /></span>
              <svg width="16" height="16" viewBox="0 0 16 16" fill="none" className="ml-[2px] mr-[7px] shrink-0" aria-hidden="true">
                <rect x="1" y="1" width="13" height="14" rx="2" fill="#f5d458" stroke="#b8912a" />
                <path d="M10 3.500c-3-1-2.500 2-3 4.500-.4 2-.5 4-2.500 4M5 7.500h4" stroke="#7a5a10" strokeWidth="1.300" />
                <path d="M12 9l3 3-3 3-3-3z" fill={i < 10 ? "#a8a8a8" : "#f2b632"} stroke={i < 10 ? "#777" : "#a8781a"} />
              </svg>
              {n}
            </li>
          ))}
        </ul>
        <ScrollBar thumb="bottom-[49px] h-[69px]" />
      </div>
      <PanelTabs on="Ogólne" off="Ulubione" />
      <span className="h-[5px]" />
    </section>
  );
}

/* ---------- error panel drawn on the chart ---------- */
const Badge = ({ n, at }: { n: string; at: string }) => (
  <span className={`absolute flex size-6 items-center justify-center rounded-full bg-[#e8484a] text-[16px] text-white shadow ${at}`}>{n}</span>
);
const Tick = ({ cls }: { cls: string }) => (
  <svg viewBox="0 0 18 18" className={`absolute size-[18px] ${cls}`} aria-hidden="true"><path d="M1 9l4-2 3 4c2-5 5-8 9-10v3c-4 4-6 8-8 13z" fill="#2fa84a" stroke="#1b7a30" strokeWidth=".6" /></svg>
);
const MiniBox = ({ on = false, big = false }: { on?: boolean; big?: boolean }) => (
  <svg viewBox="0 0 9 9" className={big ? "size-[9px] shrink-0" : "size-[6px] shrink-0"} aria-hidden="true"><rect x=".5" y=".5" width="8" height="8" fill="#fff" stroke="#888" />{on && <path d="M2 4l2 3 3-5" fill="none" stroke="#333" strokeWidth="1.300" />}</svg>
);

function FatalError() {
  const green = "flex h-[91px] flex-col items-center justify-center border-[3px] border-[#5fa526] bg-white pb-1 text-[15px] leading-[18px] text-[#5fa526] whitespace-nowrap";
  return (
    <section className="absolute left-[12px] top-[14px] flex h-[400px] w-[600px] flex-col border border-[#aaa] bg-[#cbcbcb] px-[7px] pb-[6px] font-['Liberation_Sans',Arial,sans-serif]">
      <h2 className="h-[29px] shrink-0 text-center text-[16px] leading-[29px] text-[#444]">FATAL ERROR</h2>
      <div className="flex min-h-0 flex-1 flex-col border border-[#b0b0b0] bg-[#eee]">
        <p className="mt-[9px] text-center text-[11px] font-bold leading-4">ERROR: DLL IMPORT CALLS ARE NOT ALLOWED</p>
        <p className="mt-[14px] text-center text-[12px] leading-4">YOU SHOULD ALLOW DLL IMPORT CALLS TO CONTINUE</p>
        <div className="mt-[14px] grid grid-cols-[269px_269px] gap-[23px] pl-[11px]">
          <div className="relative">
            <div className={green}>
              <p>Press <b>CTRL+O</b></p><p>(Menu: Tools - Options), choose Tab</p><p><b>Expert Advisors</b></p><p>and allow DLL imports</p>
            </div>
            <div className="h-[179px] border-x border-b border-[#ccc] bg-[#f2f2f2] text-[5px] leading-[8px] text-[#444]">
              <div className="flex h-[14px] items-start justify-end bg-white">
                <span className="flex-1 pl-[120px] pt-[3px] text-[7px]">Options</span><span className="pr-[8px] pt-[2px] text-[7px] font-bold">?</span>
                <span className="mr-[3px] mt-px h-[9px] w-[21px] bg-[#c9504e] text-center text-[7px] text-white">×</span>
              </div>
              <div className="mx-[6px] mt-[4px] grid grid-cols-3 border border-[#ccc] text-center"><span>Events</span><span>Community</span><span>Signals</span></div>
              <div className="mx-[6px] flex border-x border-[#ccc] text-center">
                <span className="w-[27px]">Server</span><span className="w-[27px] border-l border-[#ccc]">Charts</span><span className="w-[30px] border-l border-[#ccc]">Objects</span><span className="w-[27px] border-l border-[#ccc]">Trade</span>
                <span className="-mt-[2px] w-[48px] border border-b-0 border-[#ccc] bg-white">Expert Advisors</span><span className="w-[40px]">Notifications</span><span className="w-[27px] border-l border-[#ccc]">E-mail</span><span className="w-[28px] border-l border-[#ccc]">FTP</span>
              </div>
              <div className="mx-[6px] flex h-[123px] flex-col border border-[#ddd] bg-white pl-[10px] pt-[8px] leading-[11px]">
                <p className="flex items-center gap-[2px]"><MiniBox />Allow automated trading</p>
                <p className="flex items-center gap-[2px] pl-[7px] text-[#999]"><MiniBox on />Disable automated trading when the account has been changed</p>
                <p className="flex items-center gap-[2px] pl-[7px] text-[#999]"><MiniBox on />Disable automated trading when the profile has been changed</p>
                <p className="flex items-center gap-[2px] pl-[7px] text-[#999]"><MiniBox />Disable automated trading when the charts symbol or period has been changed</p>
                <p className="flex items-center gap-[2px] whitespace-nowrap"><MiniBox />Allow DLL imports (potentially dangerous, enable only for trusted applications)</p>
                <p className="flex items-center gap-[2px]"><MiniBox />Allow WebRequest for listed URL:</p>
                <div className="ml-[7px] mr-[10px] mt-[2px] h-10 border border-[#aaa] bg-[#f0f0f0] pl-[3px] leading-[9px]">
                  <p className="flex items-center gap-[3px]"><span className="size-1 rounded-full bg-[#2b7fb0]" />http://standart.premium-data.net</p>
                  <p className="flex items-center gap-[3px]"><span className="size-1 rounded-full bg-[#4fb52c]" />add new URL like 'https://www.mql5.com'</p>
                </div>
              </div>
              <div className="mr-[6px] mt-[3px] flex justify-end gap-[5px] text-center">
                <span className="w-[33px] border border-[#5a9fd8] bg-[#e4e4e4]">ОК</span><span className="w-[32px] border border-[#ccc] bg-[#e4e4e4]">Отмена</span><span className="w-[32px] border border-[#ccc] bg-[#e4e4e4]">Справка</span>
              </div>
            </div>
            <Tick cls="left-[14px] top-[172px]" />
            <Badge n="1" at="left-1 top-[61px]" /><Badge n="2" at="left-px top-[241px]" />
          </div>
          <div className="relative">
            <div className={green}>
              <p>DLL imports are also maybe used</p><p>with specific indicators. When</p><p>attaching just select <b>Common</b> Tab</p><p>and check <b>Allow DLL imports</b></p>
            </div>
            <div className="h-[179px] overflow-hidden bg-[#f2f2f2] text-[8px] text-[#333]">
              <p className="h-[20px] whitespace-nowrap bg-white pl-[223px] text-[10px] leading-[20px]">Custom Indicator</p>
              <div className="flex items-end pl-[9px] pt-[5px] text-center leading-[12px]">
                <span className="w-[28px] border border-[#bbb]">About</span><span className="w-[37px] bg-white pb-[2px]">Common</span><span className="w-[28px] border border-[#bbb]">Inputs</span>
                <span className="w-[57px] border border-l-0 border-[#bbb]">Dependencies</span><span className="w-[27px] border border-l-0 border-[#bbb]">Colors</span><span className="w-[48px] border border-l-0 border-[#bbb]">Visualization</span>
              </div>
              <div className="ml-[9px] flex h-[141px] flex-col bg-white pl-[32px] pt-[25px] text-[7px] leading-4">
                <p className="flex items-center gap-[2px]"><MiniBox big />Allow DLL imports</p>
                <p className="flex items-center gap-[2px]"><MiniBox big on />Allow external experts imports</p>
                <p className="flex items-center gap-[2px]"><MiniBox big />Allow modification of Signals settings</p>
              </div>
            </div>
            <Tick cls="left-[38px] top-[148px]" />
            <Badge n="3" at="left-1 top-[60px]" /><Badge n="4" at="left-[6px] top-[239px]" />
          </div>
        </div>
      </div>
    </section>
  );
}

/* ---------- chart window ---------- */
function MdiButton({ label, children }: { label: string; children: React.ReactNode }) {
  return <button type="button" aria-label={label} className="flex h-[17px] w-8 items-center justify-center rounded-[2px] border border-[#7f8fa9] bg-[#c9d7e6]"><svg width="13" height="11" viewBox="0 0 13 11" fill="#fff" stroke="#4a5468">{children}</svg></button>;
}
function ChartWindow() {
  return (
    <section className="flex min-w-0 flex-1 flex-col rounded-t-md border border-[#555] bg-[#d7e4f2] px-[8px] pb-[7px]">
      <header className="-mx-[8px] flex h-[31px] shrink-0 items-center rounded-t-md bg-gradient-to-b from-[#bfcddb] to-[#d7e4f2] px-[9px] pt-[8px]">
        <svg width="15" height="14" viewBox="0 0 15 14" fill="#fff" stroke="#4a8ad0" aria-hidden="true"><rect x=".5" y=".5" width="10" height="8" /><rect x="3.500" y="4.500" width="10" height="9" /><path d="M1 2h9M4 6h9" strokeWidth="2" /><path d="M5 11l2-2 2 3 2-3 1 2" fill="none" /></svg>
        <h2 className="ml-[3px] text-[11px] text-[#8a9099]">EURUSD,H1</h2>
        <div className="ml-auto flex gap-[2px] pb-1">
          <MdiButton label="Minimalizuj"><rect x="1.500" y="5.500" width="10" height="3" /></MdiButton>
          <MdiButton label="Przywróć"><rect x="1.500" y=".5" width="10" height="9" /><rect x="4.500" y="3.500" width="4" height="3" /></MdiButton>
          <MdiButton label="Zamknij"><path d="M1.500 1h3l2 2.500L8.500 1h3L8.500 5.500l3 4.500h-3l-2-2.500-2 2.500h-3l3-4.500z" /></MdiButton>
        </div>
      </header>
      <div className="relative min-h-0 flex-1 overflow-hidden bg-white">
        <ChartBack />
        <FatalError />
        <p className="absolute left-[3px] top-[771px] flex h-[23px] w-[323px] items-center gap-[5px] whitespace-pre border border-[#808080] bg-[#b0c4de] pl-[3px] font-['DejaVu_Sans_Condensed','DejaVu_Sans',sans-serif] text-[12px] text-[#222]">
          <svg width="14" height="14" viewBox="0 0 14 14" className="shrink-0" aria-hidden="true"><circle cx="7" cy="7" r="6" fill="#1e5fd8" stroke="#8a93a5" strokeWidth="2" /><path d="M5 5.500c0-3 4-2.500 4-.3C9 6.600 7 6.500 7 8.200M7 9.500v1.300" fill="none" stroke="#fff" strokeWidth="1.300" /></svg>
          <span>#Volumes Colored [ Source: loading... ]</span>
          <span>[ PINK BARS: 2 ]</span>
        </p>
        <Candles />
        <span className="pointer-events-none absolute inset-0 border-l border-t border-[#808080]" />
      </div>
    </section>
  );
}

/* ---------- options dialog ---------- */
function Check({ id, label, on = false, off = false }: { id: string; label: string; on?: boolean; off?: boolean }) {
  return (
    <div className={`flex h-6 items-center gap-[3px] whitespace-nowrap ${off ? "pl-[15px] text-[#838383]" : ""}`}>
      <span className="relative size-[13px] shrink-0">
        <input id={id} type="checkbox" defaultChecked={on} disabled={off} className={`block size-[13px] appearance-none border bg-white ${off ? "border-[#ccc]" : "border-[#333]"}`} />
        {on && <svg viewBox="0 0 13 13" className="pointer-events-none absolute inset-0" fill="none" aria-hidden="true"><path d="M2.500 6.500l3 3 5.500-6.500" stroke={off ? "#b5b5b5" : "#222"} strokeWidth="1.300" /></svg>}
      </span>
      <label htmlFor={id}>{label}</label>
    </div>
  );
}
function OptionsDialog() {
  const tab = "h-[18px] border-r border-[#dcdcdc] pb-px text-center";
  return (
    <div role="dialog" aria-label="Opcje" className="absolute left-[1037px] top-[352px] w-[577px] border border-[#6a6a6a] bg-[#f0f0f0] font-['Liberation_Sans',Arial,sans-serif] text-[11px] shadow-[0_4px_16px_rgba(0,0,0,0.4)]">
      <header className="flex h-[30px] items-center bg-white pb-[2px] pl-2 font-['Noto_Sans','Open_Sans',sans-serif]">
        <h2 className="flex-1">Opcje</h2>
        <button type="button" aria-label="Pomoc" className="w-[44px] text-[13px]">?</button>
        <button type="button" aria-label="Zamknij" className="flex w-[46px] justify-center"><svg width="12" height="12" viewBox="0 0 12 12"><path d="M1 1l10 10M11 1L1 11" stroke="#111" strokeWidth="1.200" /></svg></button>
      </header>
      <div className="px-[7px] pt-2">
        <div className="px-px">
          <div className="flex border-l border-t border-[#dcdcdc] leading-[16px]">
            <button type="button" className={`${tab} w-[189px]`}>Wydarzenia</button><button type="button" className={`${tab} w-[197px]`}>Społeczność</button><button type="button" className={`${tab} flex-1`}>Sygnały</button>
          </div>
          <div className="flex h-[18px] border-l border-t border-[#dcdcdc] leading-[16px]">
            <button type="button" className={`${tab} w-[63px]`}>Serwer</button><button type="button" className={`${tab} w-[72px]`}>Wykresy</button><button type="button" className={`${tab} w-[66px]`}>Obiekty</button><button type="button" className={`${tab} w-[63px]`}>Handel</button>
            <button type="button" className="relative -mt-[3px] h-[22px] w-[75px] border-r border-t border-[#dcdcdc] bg-white pb-[5px] text-center">Strategie</button>
            <button type="button" className={`${tab} w-[99px]`}>Powiadomienia</button><button type="button" className={`${tab} w-[60px]`}>E-mail</button><button type="button" className={`${tab} flex-1 pr-2`}>FTP</button>
          </div>
        </div>
        <div className="h-[273px] border border-[#dcdcdc] bg-white pl-[25px] pr-[21px] pt-[21px]">
          <Check id="auto" label="Zezwalaj na automatyczny trading" />
          <Check id="acc" on off label="Wyłącz automatyczny trading, gdy rachunek został zmieniony" />
          <Check id="prof" on off label="Wyłącz automatyczny trading, gdy profil został zmieniony" />
          <Check id="sym" off label="Wyłącz automatyczny trading, gdy symbol wykresów lub okres został zmieniony" />
          <Check id="dll" on label="Zezwalaj na import DLL (potencjalnie niebezpieczne, włącz tylko dla zaufanych aplikacji)" />
          <Check id="web" label="Zezwalaj na WebRequest dla wymienionych URL:" />
          <ul className="ml-[15px] mt-[6px] h-[90px] border border-[#828790] bg-[#f0f0f0] pl-[5px] pt-[3px]">
            <li className="flex items-center gap-[6px]"><svg width="11" height="11" viewBox="0 0 11 11" aria-hidden="true"><circle cx="5.500" cy="5.500" r="5" fill="#45b01e" stroke="#2c7d10" /><path d="M5.500 2.500v6M2.500 5.500h6" stroke="#fff" strokeWidth="2" /></svg>dodaj nowy URL jak 'https://www.mql5.com'</li>
          </ul>
        </div>
        <div className="flex justify-end gap-2 pb-[7px] pt-2">
          <button type="button" className="h-[21px] w-[73px] border-2 border-[#0078d7] bg-[#e1e1e1]">OK</button>
          <button type="button" className="h-[21px] w-[73px] border border-[#adadad] bg-[#e1e1e1]">Anuluj</button>
          <button type="button" className="h-[21px] w-[73px] border border-[#adadad] bg-[#e1e1e1]">Pomoc</button>
        </div>
      </div>
    </div>
  );
}

function Annotations() {
  const shafts = "M252 64L592 598M611 611L1314 437M604 618L1038 565";
  return (
    <svg className="pointer-events-none absolute inset-0 size-full" fill="none" aria-hidden="true">
      <path d={shafts} stroke="#3a1a4a" strokeWidth="4" />
      <path d={shafts} stroke="#c8101c" strokeWidth="2" />
      <path d="M242 48L247 76L262 68zM1341 430L1312 430L1315 444zM1065 562L1037 558L1038 572z" fill="#ff0000" stroke="#3a1a4a" strokeWidth=".8" />
    </svg>
  );
}

export default function App() {
  const cell = "border-l border-[#a0a0a0] pl-[5px]";
  return (
    <div className="relative flex h-screen flex-col overflow-hidden bg-[linear-gradient(#c3cfdf,#9aa8c0_25%,#5d6a80_32%,#46563a_40%,#2c3a1e_70%,#55604a)] pl-[6px] pr-[5px] font-['Noto_Sans','Open_Sans',sans-serif] text-black">
      <div className="mt-px flex min-h-0 flex-1 flex-col border-t border-[#8a8f99] bg-[#f0f0f0]">
        <header className="flex h-[30px] shrink-0 items-center bg-white pl-2 text-[11px] text-[#999]">
          <svg width="16" height="16" viewBox="0 0 16 16" aria-hidden="true"><rect width="16" height="16" fill="#1d4fa0" /><path d="M3 14l3-5-2-2 4-3 1-2 2 1 2 4-2 1 1 6h-2l-2-4-2 4z" fill="#fff" /></svg>
          <h1 className="ml-[5px]">2100076374: BlackBullMarkets-Live - EURUSD,H1</h1>
          <div className="ml-auto flex">
            <button type="button" aria-label="Minimalizuj" className="flex w-[46px] justify-center"><svg width="12" height="12" viewBox="0 0 12 12"><path d="M1 6.500h10" stroke="#999" /></svg></button>
            <button type="button" aria-label="Maksymalizuj" className="flex w-[46px] justify-center"><svg width="12" height="12" viewBox="0 0 12 12" fill="none"><rect x="1.500" y="1.500" width="9" height="9" stroke="#999" /></svg></button>
            <button type="button" aria-label="Zamknij" className="flex w-[46px] justify-center"><svg width="12" height="12" viewBox="0 0 12 12"><path d="M1 1l10 10M11 1L1 11" stroke="#999" /></svg></button>
          </div>
        </header>
        <nav className="flex h-[20px] shrink-0 items-center gap-[19px] pl-[7px] text-[11px] text-[#999]">
          {["Plik", "Widok", "Wstaw", "Wykresy", "Narzędzia", "Okno", "Pomoc"].map((m) => <a href="#" key={m}>{m}</a>)}
        </nav>
        <Toolbar />
        <main className="flex min-h-0 flex-1 border-t border-[#696969]">
          <aside className="flex w-[288px] shrink-0 flex-col border-r border-[#a0a0a0] pl-[3px] pr-1">
            <MarketWatch />
            <Navigator />
          </aside>
          <div className="flex min-w-0 flex-1 bg-[#ababab] px-[3px]"><ChartWindow /></div>
        </main>
        <footer className="flex h-[13px] shrink-0 overflow-hidden border-t border-[#a0a0a0] pl-[3px] pt-[4px] text-[11px] leading-4">
          <span className="flex-1">Aby otworzyć okno pomocy, wciśnij F1</span>
          <span className={`${cell} w-[116px]`}>Default</span><span className={`${cell} w-[102px]`} /><span className={`${cell} w-[71px]`} /><span className={`${cell} w-[71px]`} />
          <span className={`${cell} w-[68px]`} /><span className={`${cell} w-[70px]`} /><span className={`${cell} w-[66px]`} />
          <span className={`${cell} flex w-[149px] gap-1`}><span className="h-4 w-6 bg-[repeating-linear-gradient(90deg,#5a7a1c_0_3px,transparent_3px_4px)]" />34544/2 kb</span>
        </footer>
      </div>
      <div className="-ml-[6px] -mr-[5px] h-[2px] shrink-0 bg-[#3c3c3c]" />
      <OptionsDialog />
      <Annotations />
    </div>
  );
}
